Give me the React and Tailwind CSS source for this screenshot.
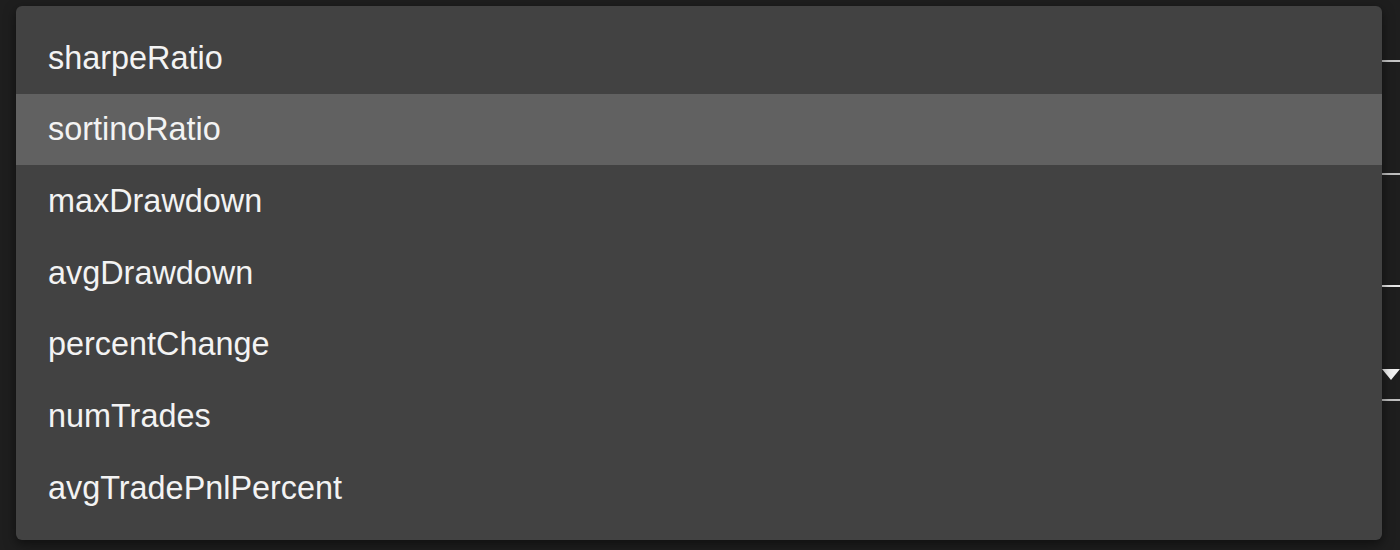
import React from 'react';

const OPTIONS = [
  'sharpeRatio',
  'sortinoRatio',
  'maxDrawdown',
  'avgDrawdown',
  'percentChange',
  'numTrades',
  'avgTradePnlPercent',
];

export default function App() {
  const active = 'sortinoRatio';

  return (
    <div className="relative w-[1400px] h-[550px] overflow-hidden bg-[#1e1e1e]" style={{ fontFamily: '"Liberation Sans", Arial, sans-serif' }}>
      {/* form fields underneath the menu */}
      <div className="flex flex-col ml-[48px]">
        <div className="h-[62px] border-b-2 border-[#c6c6c6]" />
        <div className="h-[113px] border-b-2 border-[#bdbdbd]" />
        <div className="h-[112px] border-b-2 border-[#e6e6e6]" />
        <div className="h-[114px] border-b-2 border-[#c0c0c0] relative">
          <div className="absolute right-0 top-[82px] w-0 h-0 border-l-[9px] border-r-[9px] border-t-[11px] border-l-transparent border-r-transparent border-t-[#f2f2f2]" />
        </div>
      </div>

      {/* dropdown menu */}
      <div className="absolute left-4 top-[6px] w-[1366px] h-[534px] rounded-md bg-[#424242] py-4 shadow-[0_4px_12px_rgba(0,0,0,0.5)]">
        {OPTIONS.map((opt) => (
          <div key={opt}
            className={`h-[71.7px] flex items-center px-8 text-[32.4px] text-[#f3f3f3] ${opt === active ? 'bg-[#616161]' : ''}`}>
            {opt}
          </div>
        ))}
      </div>
    </div>
  );
}
